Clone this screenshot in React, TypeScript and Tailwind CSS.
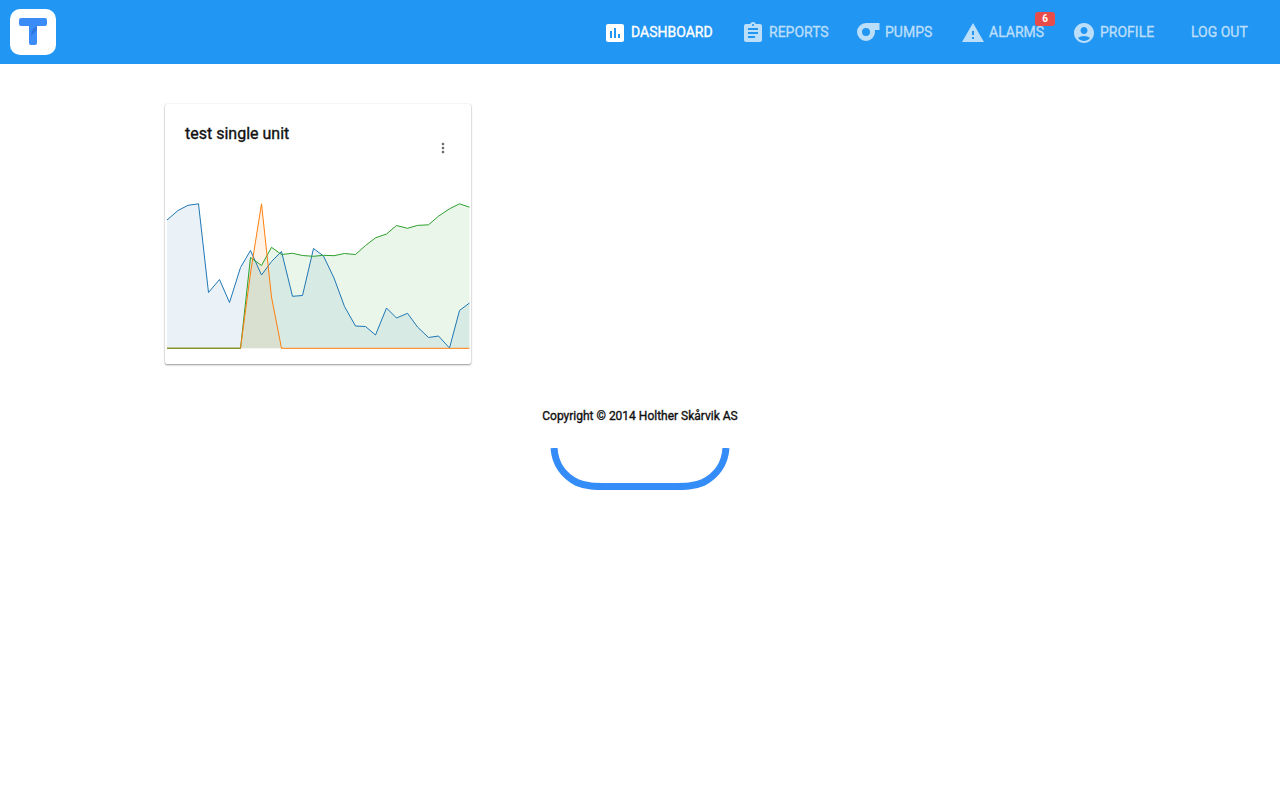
import type { ReactNode } from "react";
import { MdAccountCircle, MdAssessment, MdAssignment, MdMoreVert, MdWarning } from "react-icons/md";

function PumpIcon() {
  return (
    <svg width="24" height="24" viewBox="0 0 24 24" fill="currentColor">
      <path
        fillRule="evenodd"
        d="M9 2h13.500v7h-4.800c.2.7.3 1.300.3 2a9 9 0 1 1-9-9zm0 5a4 4 0 1 0 0 8 4 4 0 0 0 0-8z"
      />
    </svg>
  );
}

function Logo() {
  return (
    <div className="flex h-[46px] w-[46px] items-center justify-center rounded-[10px] bg-white">
      <svg width="46" height="46" viewBox="0 0 46 46">
        <path
          fill="#3b8cf6"
          d="M11 9h24a2 2 0 0 1 2 2v4a2 2 0 0 1-2 2h-8v17a2 2 0 0 1-2 2h-4a2 2 0 0 1-2-2V17h-8a2 2 0 0 1-2-2v-4a2 2 0 0 1 2-2z"
        />
        <path fill="#2f75df" d="M27 17v4l-6 6 1-6z" />
      </svg>
    </div>
  );
}

type NavItemProps = { icon: ReactNode; label: string; width: string; active?: boolean; badge?: string };

function NavItem({ icon, label, width, active, badge }: NavItemProps) {
  return (
    <a className={`relative flex items-center gap-1 whitespace-nowrap ${width} ${active ? "text-white" : "text-[#bbdefb]"}`}>
      <span className="mt-px">{icon}</span>
      <span>{label}</span>
      {badge && (
        <span className="absolute -top-[8px] right-[17px] flex h-[14px] w-5 items-center justify-center rounded-[3px] bg-[#e84c4a] text-[10px] leading-none font-bold text-white [-webkit-text-stroke:0px]">
          {badge}
        </span>
      )}
    </a>
  );
}

const blue: number[][] = [
  [167, 220], [178, 210.5], [188, 205.3], [198.5, 203.8], [208.5, 292.5], [219.5, 279.5], [229.5, 302.5],
  [240.5, 267.5], [250.5, 250.5], [261.5, 275], [271.5, 261.5], [281.5, 251.5], [292.5, 296.3], [302.5, 295.5],
  [313.5, 248.5], [323.5, 256], [334, 278], [344.5, 306.5], [355.5, 326], [365.5, 326.5], [375.5, 335],
  [386.5, 308], [396.5, 318], [407.5, 313.3], [417.5, 327], [428.5, 337.5], [438.5, 336], [449.5, 348],
  [459.5, 310.5], [469.5, 303],
];
const green: number[][] = [
  [167, 348.3], [240.5, 348.3], [250.5, 257.5], [261.5, 265.5], [271.5, 247.3], [281.5, 254.5], [292.5, 253.3],
  [302.5, 255.5], [313.5, 256.3], [323.5, 255.3], [334, 255.7], [344.5, 253.5], [355.5, 254.5], [365.5, 245.5],
  [375.5, 237.8], [386.5, 234], [396.5, 225.5], [407.5, 228.3], [417.5, 225.4], [428.5, 224.8], [438.5, 216.2],
  [449.5, 208.8], [459.5, 203.8], [469.5, 207.2],
];
const orange: number[][] = [
  [167, 348.3], [240.5, 348.3], [250.5, 273], [261.5, 203.8], [271.5, 297], [281.5, 348.3], [469.5, 348.3],
];

const series = [
  { color: "#1f77b4", points: blue },
  { color: "#ff7f0e", points: orange },
  { color: "#2ca02c", points: green },
];

function Chart() {
  return (
    <svg width="306" height="160" viewBox="165 196 306 160" className="block">
      {series.map(({ color, points }) => (
        <path key={color} fill={color} fillOpacity="0.095" d={`M167 348.3L${points.map((p) => p.join(" ")).join("L")}L469.5 348.3Z`} />
      ))}
      {[series[0], series[2], series[1]].map(({ color, points }) => (
        <path key={color} fill="none" stroke={color} strokeWidth="1" d={`M${points.map((p) => p.join(" ")).join("L")}`} />
      ))}
      <path d="M167 348.3H240.5" stroke="#2ca02c" strokeOpacity="0.6" />
    </svg>
  );
}

export default function App() {
  return (
    <div className="min-h-screen bg-white font-['Roboto',sans-serif] text-[#111111] [-webkit-text-stroke:0.35px]">
      <header className="flex h-16 items-center bg-[#2196f3] pl-[10px]">
        <Logo />
        <nav className="ml-auto flex h-16 items-center text-[14px] leading-5 font-normal">
          <NavItem icon={<MdAssessment size={24} />} label="DASHBOARD" width="w-[138px]" active />
          <NavItem icon={<MdAssignment size={24} />} label="REPORTS" width="w-[116px]" />
          <NavItem icon={<PumpIcon />} label="PUMPS" width="w-[104px]" />
          <NavItem icon={<MdWarning size={24} />} label="ALARMS" width="w-[111px]" badge="6" />
          <NavItem icon={<MdAccountCircle size={24} />} label="PROFILE" width="w-[119px]" />
          <a className="w-[89px] whitespace-nowrap text-[#bbdefb]">LOG OUT</a>
        </nav>
      </header>
      <main className="pt-10 pl-[165px]">
        <section className="flex h-[260px] w-[306px] flex-col rounded-[2px] bg-white shadow-[0_1px_2px_rgba(0,0,0,0.4),0_0_1px_rgba(0,0,0,0.2)]">
          <div className="flex h-[92px] justify-between pt-[18px] pr-5 pl-5">
            <h2 className="text-[16px] leading-6 font-normal">test single unit</h2>
            <MdMoreVert size={16} className="mt-[18px] text-[#6b6b6b]" />
          </div>
          <Chart />
        </section>
      </main>
      <footer className="flex flex-col items-center pt-[42px]">
        <p className="text-[12px] leading-5 font-normal">Copyright © 2014 Holther Skårvik AS</p>
        <svg width="180" height="42" viewBox="550 448 180 42" className="mt-[22px]">
          <path d="M554 448C555 464 564 476 577 482.500C586 486.500 595 486.500 608 486.500H672C685 486.500 694 486.500 703 482.500C716 476 725 464 726 448" fill="none" stroke="#338cf7" strokeWidth="7" />
        </svg>
      </footer>
    </div>
  );
}
